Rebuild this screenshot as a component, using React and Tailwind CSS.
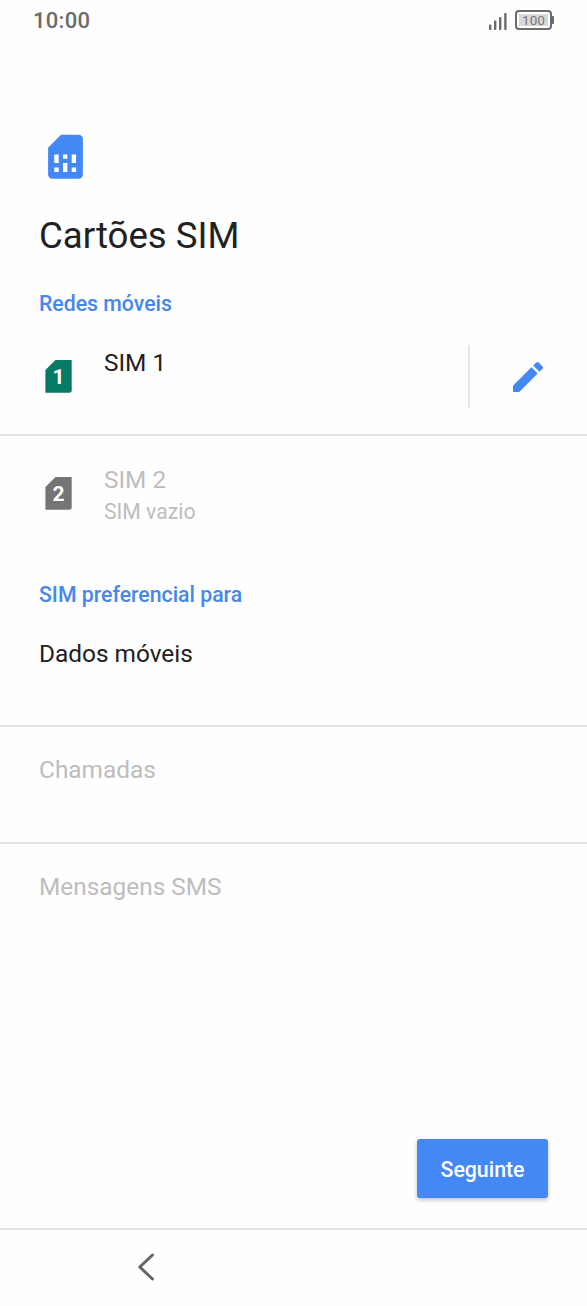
const preferences = [
  { label: 'Dados móveis', enabled: true },
  { label: 'Chamadas', enabled: false },
  { label: 'Mensagens SMS', enabled: false },
]

function StatusBar() {
  return (
    <header className="flex h-10 items-center justify-between pr-[33px] pl-[33px] text-[#6b6b6b]">
      <span className="pt-0.5 text-[22px] leading-10 font-medium tracking-[0.3px]">10:00</span>
      <div className="flex items-center gap-[7px]">
        <svg width="19" height="18" viewBox="0 0 19 18" fill="#6b6b6b" className="mt-[3px]">
          <rect x="0" y="11.500" width="2.4" height="5.5" rx="0.8" />
          <rect x="5" y="7.500" width="2.4" height="9.5" rx="0.8" />
          <rect x="10" y="4" width="2.4" height="13" rx="0.8" />
          <rect x="15.200" y="0" width="2.4" height="17" rx="0.8" />
        </svg>
        <div className="flex items-center">
          <div className="flex h-5 w-[37px] rounded-[4px] border-2 border-[#6b6b6b] p-[2px]">
            <span className="flex flex-1 items-center justify-center bg-[#d9d9d9] pt-px text-[13.500px] leading-none text-[#777]">
              100
            </span>
          </div>
          <div className="h-2 w-[2px] rounded-r-[1px] bg-[#6b6b6b]" />
        </div>
      </div>
    </header>
  )
}

function SimCardIcon() {
  return (
    <svg width="35" height="45" viewBox="0 0 35 45" className="ml-[48px]">
      <path
        d="M13 .7H30.700A4.200 4.200 0 0 1 34.900 4.900V40.600A4.200 4.200 0 0 1 30.700 44.800H4.300A4.200 4.200 0 0 1 .1 40.600V13.700Z"
        fill="#4388f5"
      />
      <path
        d="M6.300 20.400h4.400v8.600H6.300ZM6.300 33.400h4.400v4.500H6.300ZM15 20.400h4.400v4.300H15ZM15 29h4.400v8.900H15ZM23.700 20.400h4.400v8.600h-4.400ZM23.700 33.400h4.400v4.500h-4.400Z"
        fill="#fff"
      />
    </svg>
  )
}

function SlotIcon({ number, color }) {
  return (
    <svg width="27" height="33" viewBox="0 0 27 33" className="shrink-0">
      <path d="M10.500 0H26.700V30.200A2.500 2.500 0 0 1 24.200 32.700H.4V10Z" fill={color} />
      <text x="13.500" y="24.300" textAnchor="middle" fill="#fff" className="font-[Roboto,sans-serif] text-[21px] font-bold">
        {number}
      </text>
    </svg>
  )
}

function SectionTitle({ children }) {
  return <h2 className="pl-[39px] text-[21.250px] leading-[28px] font-medium text-[#4587ea]">{children}</h2>
}

export default function App() {
  return (
    <div className="flex h-[1306px] w-[587px] flex-col bg-[#fefefe] font-[Roboto,sans-serif] text-[#212121]">
      <StatusBar />

      <main className="flex flex-1 flex-col pt-[94px]">
        <SimCardIcon />
        <h1 className="mt-[33px] pl-[39px] text-[36.600px] leading-[48px]">Cartões SIM</h1>

        <div className="mt-[30px]">
          <SectionTitle>Redes móveis</SectionTitle>
        </div>
        <div className="flex h-[118px] items-center border-b-2 border-[#e3e3e3] pl-[45px]">
          <SlotIcon number="1" color="#067a67" />
          <span className="mb-[26px] ml-[32px] flex-1 text-[24.400px] leading-8">SIM 1</span>
          <div className="flex h-[63px] w-[119px] items-center justify-center border-l-2 border-[#e6e6e6]">
            <svg width="40" height="40" viewBox="0 0 24 24" fill="#4388f5" className="mt-0.5 mr-0.5">
              <path d="M3 17.250V21h3.750L17.810 9.940l-3.750-3.750L3 17.250zM20.710 7.040a.996.996 0 0 0 0-1.410l-2.340-2.340a.996.996 0 0 0-1.410 0l-1.830 1.830 3.750 3.750 1.830-1.830z" />
            </svg>
          </div>
        </div>
        <div className="flex h-[114px] items-center pl-[45px]">
          <SlotIcon number="2" color="#757575" />
          <div className="mb-[-4px] ml-[32px] text-[#bdbdbd]">
            <p className="text-[24.400px] leading-8">SIM 2</p>
            <p className="pt-px text-[21.200px] leading-[30px]">SIM vazio</p>
          </div>
        </div>

        <div className="mt-[31px]">
          <SectionTitle>SIM preferencial para</SectionTitle>
        </div>
        <ul className="mt-px divide-y-2 divide-[#e3e3e3]">
          {preferences.map(({ label, enabled }) => (
            <li
              key={label}
              className={`h-[117px] pl-[39px] text-[24.400px] leading-8 ${enabled ? 'pt-[28px]' : 'pt-[27px] text-[#bdbdbd]'}`}
            >
              {label}
            </li>
          ))}
        </ul>

        <button className="mt-auto mr-[39px] mb-[30px] h-[59px] w-[131px] self-end rounded-[3px] bg-[#4388f5] pt-[3px] text-[21.300px] font-medium text-white shadow-[0_2px_4px_rgba(0,0,0,0.25)]">
          Seguinte
        </button>
      </main>

      <nav className="flex h-[78px] items-center border-t-2 border-[#e3e3e3] pb-[2px] pl-[136px]">
        <svg width="20" height="30" viewBox="0 0 20 30" fill="none" stroke="#666" strokeWidth="3">
          <path d="M16.500 3 3.800 15 16.500 27" strokeLinejoin="round" strokeLinecap="round" />
        </svg>
      </nav>
    </div>
  )
}
